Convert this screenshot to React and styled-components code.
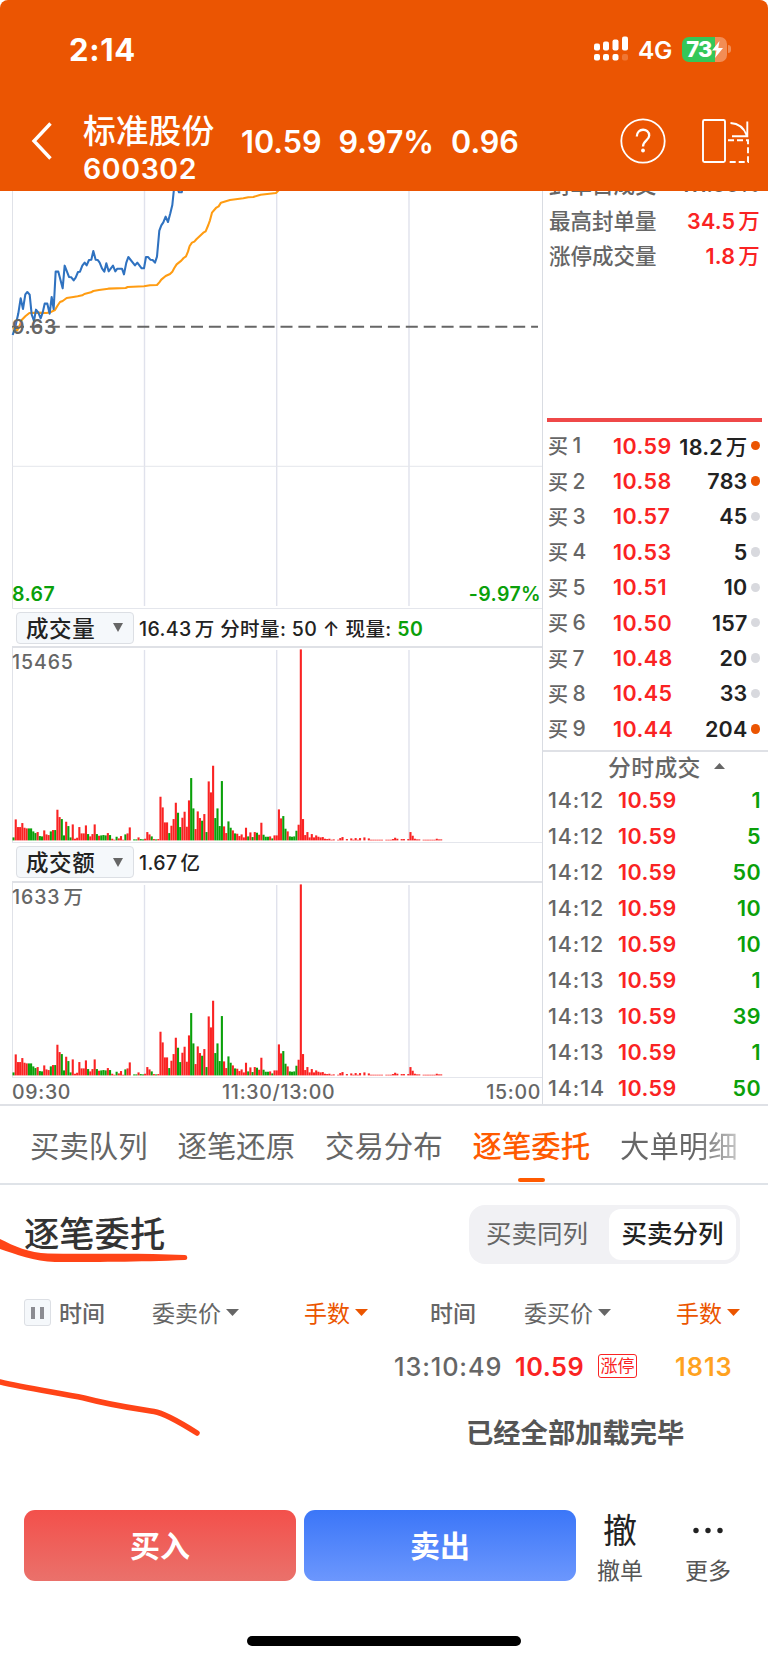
import React from "react";
import styled, { createGlobalStyle } from "styled-components";

const GlobalStyle = createGlobalStyle`
  * {
    box-sizing: border-box;
  }
  body {
    margin: 0;
    background: #fff;
    font-family: Inter, "Noto Sans CJK SC", sans-serif;
    color: #222;
  }
`;

const RED = "#fa2323";
const GREEN = "#0aa00a";
const GREY = "#666";

// one entry per minute: colour and height
const bars =
  "g9 r63 r40 r40 r52 r38 r36 g36 g36 g27 g22 r25 g13 g12 r30 r18 r16 g27 r31 g31 r92 r70 g64 g15 r56 g43 g9 r48 r5 r8 r40 r21 r21 r45 g19 r12 r19 r48 g19 r14 g15 g16 g15 r22 g16 r5 r2 g11 r6 r13 r2 g18 r21 r39 r0 g3 g3 r9 g4 g3 r5 r25 r18 g12 r4 g3 r4 r131 r99 r54 r54 g22 r44 r64 r113 g83 g40 r68 r86 r41 r120 g187 g96 r34 r87 r67 g59 r79 g25 r177 r144 r224 g67 g96 g43 g178 r42 r22 g57 g38 r30 g21 r20 r13 r18 r9 r38 g12 r24 g10 r25 g23 r17 r53 g17 g11 g11 r12 g6 r15 r15 r93 r66 g73 g35 r27 g12 g11 g12 g29 r47 r573 r64 r16 r25 r9 r19 r9 r15 r11 r9 r10 r5 r4 r5 r2 r3 r0 r2 r7 r10 r0 r4 r0 r6 r2 r7 r2 r7 r0 r9 r0 r6 r2 r2 r2 r2 r2 r2 r0 r2 r2 r2 r4 r8 r5 r0 r4 r4 r0 r4 r25 r14 r5 r3 r3 r0 r2 r2 r2 r2 r2 r2 r5 r3 r3"
    .split(" ")
    .map((b) => ({ up: b[0] === "r", h: Number(b.slice(1)) / 3 }));

const buys = [
  [1, "10.59", "18.2", true, "万"],
  [2, "10.58", "783", true],
  [3, "10.57", "45", false],
  [4, "10.53", "5", false],
  [5, "10.51", "10", false],
  [6, "10.50", "157", false],
  [7, "10.48", "20", false],
  [8, "10.45", "33", false],
  [9, "10.44", "204", true],
];

const deals = [
  ["14:12", 1],
  ["14:12", 5],
  ["14:12", 50],
  ["14:12", 10],
  ["14:12", 10],
  ["14:13", 1],
  ["14:13", 39],
  ["14:13", 1],
  ["14:14", 50],
];

const pricePoints =
  "38,450 45,430 55,385 62,340 69,372 76,328 82,321 89,329 95,388 102,408 108,374 115,383 122,400 128,383 134,356 142,356 149,386 155,336 161,372 167,260 175,260 188,310 194,242 207,276 214,277 221,286 227,278 234,261 240,260 247,242 254,233 260,241 267,225 274,224 280,198 287,224 293,225 299,233 306,250 313,260 319,235 326,259 339,242 346,259 352,251 366,251 372,268 379,233 385,216 405,241 412,233 425,250 432,250 438,216 444,216 451,224 458,225 465,233 471,215 478,137 484,121 490,112 497,95 504,111 511,85 517,60 522,12 533,12 537,22 545,22 548,12";
const averagePoints =
  "38,430 52,436 58,425 65,405 76,394 88,384 115,383 140,384 155,380 165,375 172,363 180,351 188,348 200,339 220,336 233,334 247,331 253,327 273,322 280,318 297,315 325,311 377,309 383,306 432,304 450,301 471,300 478,292 484,284 497,273 510,267 517,260 523,249 530,238 544,227 551,219 558,214 564,200 569,183 576,173 583,170 590,162 610,143 617,139 625,120 630,106 636,83 648,69 656,64 663,53 690,45 730,40 745,37 760,36 782,29 828,24 838,14";

const Grid = ({ top = 0, bottom }) => (
  <>
    {[144.5, 276.7, 409].map((x) => (
      <line key={x} x1={x} x2={x} y1={top} y2={bottom} stroke="#e0e2ec" strokeWidth="1.4" />
    ))}
    <line x1="12.5" x2="12.5" y1="0" y2={bottom + 2} stroke="#e0e2e8" />
  </>
);

const PriceChart = () => (
  <Plot height={418} viewBox="0 0 542 418">
    <Grid bottom={415} />
    <path d="M12 275.3H542M12 417.5H542" stroke="#e4e6ec" />
    <path d="M12 135.7H538" stroke="#666" strokeWidth="2" strokeDasharray="12 5.9" />
    <g transform="translate(0 -6) scale(0.3333)" fill="none" strokeLinejoin="round">
      <polyline points={averagePoints} stroke="#ff9c12" strokeWidth="6.2" />
      <polyline points={pricePoints} stroke="#2f72c0" strokeWidth="6.2" />
    </g>
  </Plot>
);

const VolumeChart = () => (
  <Plot height={195} viewBox="0 0 542 195">
    <Grid top={2} bottom={192.5} />
    <path d="M12 194.5H542" stroke="#e4e6ec" />
    {bars.map((b, i) => (
      <rect
        key={i}
        x={12.5 + i * 2.193}
        y={192.4 - b.h}
        width="2.1"
        height={b.h}
        fill={b.up ? RED : GREEN}
      />
    ))}
  </Plot>
);

const Caret = ({ color = GREY, width = 13, height = 7, up }) => (
  <svg width={width} height={height} viewBox="0 0 12 7" preserveAspectRatio="none">
    <path d={up ? "M0 7L6 0L12 7Z" : "M0 0H12L6 7Z"} fill={color} />
  </svg>
);

const App = () => (
  <Screen>
    <GlobalStyle />
    <Header>
      <StatusBar>
        <Clock>2:14</Clock>
        <svg width="36" height="26" viewBox="0 0 36 26" fill="#fff">
          <rect x="0" y="7.500" width="6" height="7" rx="2" />
          <rect x="9" y="5.500" width="6" height="9" rx="2" />
          <rect x="18.500" y="3.500" width="6" height="11" rx="2" />
          <rect x="28" y="0.500" width="6" height="14" rx="2" />
          <rect x="0" y="18" width="6" height="6.500" rx="2" />
          <rect x="9" y="18" width="6" height="6.500" rx="2" />
          <rect x="18.500" y="18" width="6" height="6.500" rx="2" />
          <rect x="28" y="18" width="6" height="6.500" rx="2" opacity="0.2" />
        </svg>
        <Network>4G</Network>
        <Battery>
          73
          <svg width="11" height="17" viewBox="0 0 11 17">
            <path d="M7.500 0L0 9.500H4.500L3 17L11 7H6.300Z" fill="#fff" />
          </svg>
        </Battery>
        <BatteryTip />
      </StatusBar>
      <NavBar>
        <svg width="22" height="40" viewBox="0 0 22 40">
          <path d="M20.500 2.500L4 20L20.500 37.500" fill="none" stroke="#fff" strokeWidth="3.400" />
        </svg>
        <Stock>
          <StockName>标准股份</StockName>
          <StockCode>600302</StockCode>
        </Stock>
        <Quote>
          <span>10.59</span>
          <span>9.97%</span>
          <span>0.96</span>
        </Quote>
        <NavIcons>
          <svg width="46" height="46" viewBox="0 0 46 46" fill="none" stroke="#fff">
            <circle cx="23" cy="23" r="21.700" strokeWidth="1.800" />
            <path d="M16.800 18.500C16.800 9.500 29.200 9.800 29.200 17.500C29.200 22.500 23 22.300 23 28.500" strokeWidth="2.300" />
            <circle cx="23" cy="32.500" r="1.900" fill="#fff" stroke="none" />
          </svg>
          <svg width="50" height="46" viewBox="0 0 50 46" fill="none" stroke="#fff" strokeWidth="1.900">
            <rect x="2" y="2" width="22" height="42" rx="1.500" />
            <path d="M29.500 5C37 5.500 43 10 45.500 17M46.300 3.500V18.300H31" />
            <path d="M27 22.300H47V44H27" strokeDasharray="6 3" />
          </svg>
        </NavIcons>
      </NavBar>
    </Header>

    <Market>
      <ChartColumn>
        <PriceChart />
        <BaseLabel>9.63</BaseLabel>
        <LowLabels>
          <span>8.67</span>
          <span>-9.97%</span>
        </LowLabels>
        <IndicatorBar>
          <Picker>
            成交量
            <Caret width={10} height={9} />
          </Picker>
          <Reading>
            16.43<Unit>万</Unit> 分时量: 50 ↑ 现量: <Down>50</Down>
          </Reading>
        </IndicatorBar>
        <VolumeChart />
        <MaxLabel>15465</MaxLabel>
        <IndicatorBar $tall>
          <Picker>
            成交额
            <Caret width={10} height={9} />
          </Picker>
          <Reading>
            1.67<Unit>亿</Unit>
          </Reading>
        </IndicatorBar>
        <VolumeChart />
        <MaxLabel $second>
          1633<Unit>万</Unit>
        </MaxLabel>
        <TimeAxis>
          <span>09:30</span>
          <span>11:30/13:00</span>
          <span>15:00</span>
        </TimeAxis>
      </ChartColumn>

      <SideColumn>
        <StatList>
          <Stat>
            <StatName>封单占成交</StatName>
            <span>111.66%</span>
          </Stat>
          <Stat>
            <StatName>最高封单量</StatName>
            <StatValue>
              34.5<Unit>万</Unit>
            </StatValue>
          </Stat>
          <Stat>
            <StatName>涨停成交量</StatName>
            <StatValue>
              1.8<Unit>万</Unit>
            </StatValue>
          </Stat>
        </StatList>
        <BuyList>
          {buys.map(([level, price, volume, active, unit]) => (
            <BuyRow key={level}>
              <BuyLevel>
                买<span>{level}</span>
              </BuyLevel>
              <Price>{price}</Price>
              <Volume>
                {volume}
                {unit && <Unit>{unit}</Unit>}
              </Volume>
              <Dot $active={active} />
            </BuyRow>
          ))}
        </BuyList>
        <DealTitle>
          分时成交
          <Caret up width={11} height={6} />
        </DealTitle>
        {deals.map(([time, amount], i) => (
          <DealRow key={i}>
            <span>{time}</span>
            <Price>10.59</Price>
            <DealAmount>{amount}</DealAmount>
          </DealRow>
        ))}
      </SideColumn>
    </Market>

    <Tabs>
      <Tab>买卖队列</Tab>
      <Tab>逐笔还原</Tab>
      <Tab>交易分布</Tab>
      <Tab $active>逐笔委托</Tab>
      <Tab>大单明细</Tab>
    </Tabs>

    <Orders>
      <OrdersHead>
        <OrdersTitle>逐笔委托</OrdersTitle>
        <Segmented>
          <Segment>买卖同列</Segment>
          <Segment $active>买卖分列</Segment>
        </Segmented>
      </OrdersHead>
      <OrdersColumns>
        <Pause>
          <i />
          <i />
        </Pause>
        <Strong>时间</Strong>
        <Sort>
          委卖价
          <Caret />
        </Sort>
        <Sort $active>
          手数
          <Caret color="#eb5500" />
        </Sort>
        <Strong>时间</Strong>
        <Sort>
          委买价
          <Caret />
        </Sort>
        <Sort $active>
          手数
          <Caret color="#eb5500" />
        </Sort>
      </OrdersColumns>
      <OrderRow>
        <OrderTime>13:10:49</OrderTime>
        <OrderPrice>10.59</OrderPrice>
        <LimitTag>涨停</LimitTag>
        <OrderAmount>1813</OrderAmount>
      </OrderRow>
      <Finished>已经全部加载完毕</Finished>
      <Marker width="210" height="256" viewBox="0 0 210 256">
        <path
          d="M0 54C14 61 29 68 48 68.500C90 69.500 135 67.500 184.500 70A2.500 2.500 0 0 1 185 75C140 77 90 77 55 77C35 76.500 15 69 0 64Z"
          fill="#ff4417"
        />
        <path
          d="M0 197C25 203 60 208 84 213C110 220 125 222 154 226.500C164 228 178 236 197 248"
          fill="none"
          stroke="#ff4417"
          strokeWidth="5.500"
          strokeLinecap="round"
        />
      </Marker>
    </Orders>

    <Actions>
      <TradeButton $from="#f3504b" $to="#ea716b">
        买入
      </TradeButton>
      <TradeButton $from="#3b76f8" $to="#6c97fd">
        卖出
      </TradeButton>
      <Action>
        <b>撤</b>
        <span>撤单</span>
      </Action>
      <Action>
        <svg width="30" height="41" viewBox="0 0 30 41" fill="#222">
          <circle cx="3" cy="20.500" r="2.700" />
          <circle cx="15" cy="20.500" r="2.700" />
          <circle cx="27" cy="20.500" r="2.700" />
        </svg>
        <span>更多</span>
      </Action>
    </Actions>
    <HomeBar />
  </Screen>
);

const Screen = styled.div`
  width: 768px;
  height: 1663px;
  display: flex;
  flex-direction: column;
  background: #fff;
  overflow: hidden;
  white-space: nowrap;
`;

const Header = styled.header`
  height: 191px;
  flex: none;
  background: #eb5502;
  border-radius: 8px 8px 0 0;
  color: #fff;
`;

const StatusBar = styled.div`
  height: 98px;
  padding: 0 37px 0 69px;
  display: flex;
  align-items: center;
`;

const Clock = styled.div`
  flex: 1;
  font-size: 31px;
  font-weight: 700;
  letter-spacing: 0.7px;
`;

const Network = styled.div`
  margin: 1px 10px 0 8px;
  width: 34px;
  font-size: 24.5px;
  font-weight: 600;
  letter-spacing: -0.3px;
`;

const Battery = styled.div`
  width: 45px;
  height: 25px;
  border-radius: 7px;
  background: linear-gradient(90deg, #34c759 33px, #f28d55 33px);
  display: flex;
  align-items: center;
  justify-content: center;
  font-size: 22px;
  font-weight: 800;
  letter-spacing: -0.8px;
`;

const BatteryTip = styled.div`
  width: 3px;
  height: 8px;
  margin-left: 1px;
  border-radius: 0 3px 3px 0;
  background: #f28d55;
`;

const NavBar = styled.div`
  height: 93px;
  padding: 0 17px 7px 30px;
  display: flex;
  align-items: center;
`;

const Stock = styled.div`
  width: 158px;
  margin-left: 31px;
  padding-top: 18px;
`;

const StockName = styled.div`
  font-size: 32.8px;
  font-weight: 500;
  line-height: 38px;
`;

const StockCode = styled.div`
  font-size: 28.5px;
  font-weight: 600;
  line-height: 38px;
  letter-spacing: 0.6px;
`;

const Quote = styled.div`
  padding-top: 1px;
  display: flex;
  gap: 17px;
  font-size: 30.6px;
  font-weight: 600;
`;

const NavIcons = styled.div`
  margin-left: auto;
  display: flex;
  gap: 35px;
`;

const Market = styled.main`
  height: 915px;
  flex: none;
  display: flex;
  border-bottom: 2px solid #dfe1e6;
`;

const ChartColumn = styled.div`
  position: relative;
  width: 543px;
  border-right: 1px solid #d9dce2;
  font-size: 19.5px;
  font-weight: 500;
  letter-spacing: 0.6px;
`;

const Plot = styled.svg`
  display: block;
  width: 542px;
  height: ${(p) => p.height}px;
`;

/* labels drawn over the plots */
const BaseLabel = styled.div`
  position: absolute;
  left: 12px;
  top: 124px;
  line-height: 24px;
  font-weight: 600;
  color: ${GREY};
`;

const LowLabels = styled.div`
  position: absolute;
  left: 12px;
  right: 1px;
  top: 391px;
  line-height: 24px;
  display: flex;
  justify-content: space-between;
  font-weight: 600;
  letter-spacing: 0.4px;
  color: ${GREEN};
`;

const MaxLabel = styled.div`
  position: absolute;
  left: 12px;
  top: ${(p) => (p.$second ? 694 : 459)}px;
  line-height: 24px;
  color: ${GREY};
  letter-spacing: 0.9px;
`;

const Unit = styled.span`
  margin-left: 3px;
`;

const Reading = styled.span`
  padding-bottom: 1px;
  letter-spacing: 0.4px;
`;

const Down = styled.span`
  font-weight: 600;
  color: ${GREEN};
`;

const IndicatorBar = styled.div`
  height: ${(p) => (p.$tall ? 40 : 39)}px;
  margin-left: 12px;
  padding-left: 4px;
  display: flex;
  align-items: center;
  gap: 5px;
  border-bottom: 2px solid #dfe1e6;
`;

const Picker = styled.div`
  width: 118px;
  height: 32px;
  padding: 0 10px 2px 9px;
  display: flex;
  align-items: center;
  justify-content: space-between;
  border: 1px solid #dcdfe4;
  border-radius: 4px;
  background: #f5f8fb;
  font-size: 22.5px;
  svg {
    position: relative;
    top: 1px;
  }
`;

const TimeAxis = styled.div`
  padding: 0 1px 3px 12px;
  height: 31px;
  display: flex;
  align-items: center;
  justify-content: space-between;
  letter-spacing: 0.7px;
  color: ${GREY};
`;

const SideColumn = styled.aside`
  flex: 1;
  font-size: 21.5px;
  font-weight: 600;
  color: ${GREY};
  letter-spacing: 0.4px;
`;

const StatList = styled.div`
  height: 231px;
  margin: 0 6px 0 4px;
  padding: 0 2px;
  border-bottom: 4px solid #ef4848;
  display: flex;
  flex-direction: column;
  overflow: hidden;
  &::before {
    content: "";
    flex: none;
    margin-top: -25px;
  }
`;

const Stat = styled.div`
  height: 35.6px;
  flex: none;
  display: flex;
  align-items: center;
  justify-content: space-between;
  letter-spacing: -0.4px;
`;

const StatName = styled.span`
  font-weight: 500;
  letter-spacing: 0;
`;

const StatValue = styled.span`
  color: ${RED};
  letter-spacing: 0.2px;
  span {
    font-weight: 500;
  }
`;

const BuyList = styled.div`
  height: 330px;
  padding-top: 6px;
  border-bottom: 2px solid #dfe1e6;
`;

const BuyRow = styled.div`
  height: 35.4px;
  padding: 0 8px 0 5px;
  display: flex;
  align-items: center;
`;

const BuyLevel = styled.div`
  width: 65px;
  display: flex;
  align-items: center;
  font-size: 20px;
  font-weight: 500;
  span {
    margin-left: 4px;
    font-size: 21px;
  }
`;

const Price = styled.span`
  width: 60px;
  color: ${RED};
`;

const Volume = styled.span`
  flex: 1;
  text-align: right;
  letter-spacing: 0.2px;
  color: #222;
  span {
    font-weight: 500;
  }
`;

const Dot = styled.i`
  width: 9.5px;
  height: 9.5px;
  margin-left: 3px;
  border-radius: 50%;
  background: ${(p) => (p.$active ? "#eb5502" : "#d8d9de")};
`;

const DealTitle = styled.div`
  height: 30px;
  padding: 0 0 2px 65px;
  display: flex;
  align-items: center;
  gap: 13px;
  font-size: 22.8px;
  font-weight: 500;
`;

const DealRow = styled.div`
  height: 35.9px;
  padding: 1px 7px 0 5px;
  display: flex;
  align-items: center;
  span:first-child {
    width: 70px;
    font-weight: 500;
    letter-spacing: 0.9px;
  }
`;

const DealAmount = styled.span`
  flex: 1;
  text-align: right;
  color: ${GREEN};
`;

const Tabs = styled.nav`
  height: 79px;
  flex: none;
  padding-left: 30px;
  display: flex;
  gap: 30px;
  border-bottom: 2px solid #dfe3e8;
  background: #fff;
`;

const Tab = styled.div`
  position: relative;
  width: 117.5px;
  line-height: 82px;
  font-size: 29.4px;
  color: ${(p) => (p.$active ? "#ff5a00" : GREY)};
  font-weight: ${(p) => (p.$active ? 500 : 400)};
  &::after {
    content: "";
    position: absolute;
    left: 45px;
    bottom: 1px;
    width: 27px;
    height: 4px;
    border-radius: 2px;
    background: ${(p) => (p.$active ? "#ff5a00" : "none")};
  }
  &:last-child {
    background: linear-gradient(90deg, #666 75px, #ccc 120px);
    background-clip: text;
    color: transparent;
  }
`;

const Orders = styled.section`
  position: relative;
  height: 325px;
  flex: none;
`;

const OrdersHead = styled.div`
  height: 98px;
  padding: 0 28px 0 24px;
  display: flex;
  align-items: center;
  justify-content: space-between;
`;

const OrdersTitle = styled.h2`
  margin: 0;
  padding-bottom: 6px;
  font-size: 35.3px;
  font-weight: 500;
  color: #333;
`;

const Segmented = styled.div`
  width: 271px;
  height: 59px;
  padding: 4px;
  display: flex;
  border-radius: 16px;
  background: #f1f1f4;
`;

const Segment = styled.div`
  width: ${(p) => (p.$active ? 127 : 136)}px;
  padding-right: ${(p) => (p.$active ? 0 : 8)}px;
  border-radius: 12px;
  background: ${(p) => (p.$active ? "#fff" : "none")};
  color: ${(p) => (p.$active ? "#222" : GREY)};
  font-size: 25.5px;
  font-weight: ${(p) => (p.$active ? 500 : 400)};
  line-height: 50px;
  text-align: center;
`;

const OrdersColumns = styled.div`
  height: 59px;
  padding-left: 24px;
  display: grid;
  grid-template-columns: 35px 93px 152px 126px 94px 152px 70px;
  align-items: center;
  font-size: 23px;
`;

const Pause = styled.div`
  width: 27px;
  height: 27px;
  display: flex;
  align-items: center;
  justify-content: center;
  gap: 5px;
  border: 1px solid #dcdfe4;
  border-radius: 3px;
  background: #f5f8fb;
  i {
    width: 4px;
    height: 12px;
    background: #8b8b91;
  }
`;

const Strong = styled.div`
  padding-bottom: 2px;
  font-weight: 500;
  color: ${GREY};
`;

const Sort = styled.div`
  display: flex;
  align-items: center;
  gap: 5px;
  padding-bottom: 2px;
  color: ${(p) => (p.$active ? "#eb5500" : GREY)};
  svg {
    margin-top: 2px;
  }
`;

const OrderRow = styled.div`
  height: 48px;
  padding-left: 394px;
  display: flex;
  align-items: center;
  font-size: 25.3px;
  font-weight: 600;
  letter-spacing: 0.5px;
`;

const OrderTime = styled.div`
  width: 121px;
  font-weight: 500;
  letter-spacing: 0.9px;
  color: ${GREY};
`;

const OrderPrice = styled.div`
  width: 83px;
  color: ${RED};
`;

const LimitTag = styled.div`
  width: 39px;
  height: 24px;
  margin-right: 38px;
  border: 1px solid ${RED};
  border-radius: 3px;
  color: ${RED};
  font-size: 17px;
  font-weight: 400;
  letter-spacing: 0;
  line-height: 22px;
  text-align: center;
`;

const OrderAmount = styled.div`
  letter-spacing: 1px;
  color: #ffa21f;
`;

const Finished = styled.div`
  padding: 23px 0 0 466px;
  font-size: 27.3px;
  font-weight: 700;
  line-height: 42px;
  color: #555;
`;

const Marker = styled.svg`
  position: absolute;
  left: 0;
  top: 0;
`;

const Actions = styled.footer`
  height: 71px;
  flex: none;
  padding-left: 24px;
  display: flex;
`;

const TradeButton = styled.button`
  width: 272px;
  height: 71px;
  margin-right: 8px;
  padding: 0 0 3px;
  border: none;
  border-radius: 11px;
  background: linear-gradient(${(p) => p.$from}, ${(p) => p.$to});
  color: #fff;
  font: inherit;
  font-size: 30px;
  font-weight: 700;
`;

const Action = styled.div`
  width: 88px;
  display: flex;
  flex-direction: column;
  align-items: center;
  font-size: 23px;
  color: #555;
  b {
    height: 41px;
    color: #222;
    font-size: 34px;
    font-weight: 400;
    line-height: 42px;
  }
  svg {
    flex: none;
  }
  span {
    line-height: 40px;
  }
  &:nth-child(3) {
    margin-left: -8px;
  }
`;

const HomeBar = styled.div`
  width: 274px;
  height: 10px;
  margin: 55px auto 0;
  border-radius: 5px;
  background: #000;
`;

export default App;
